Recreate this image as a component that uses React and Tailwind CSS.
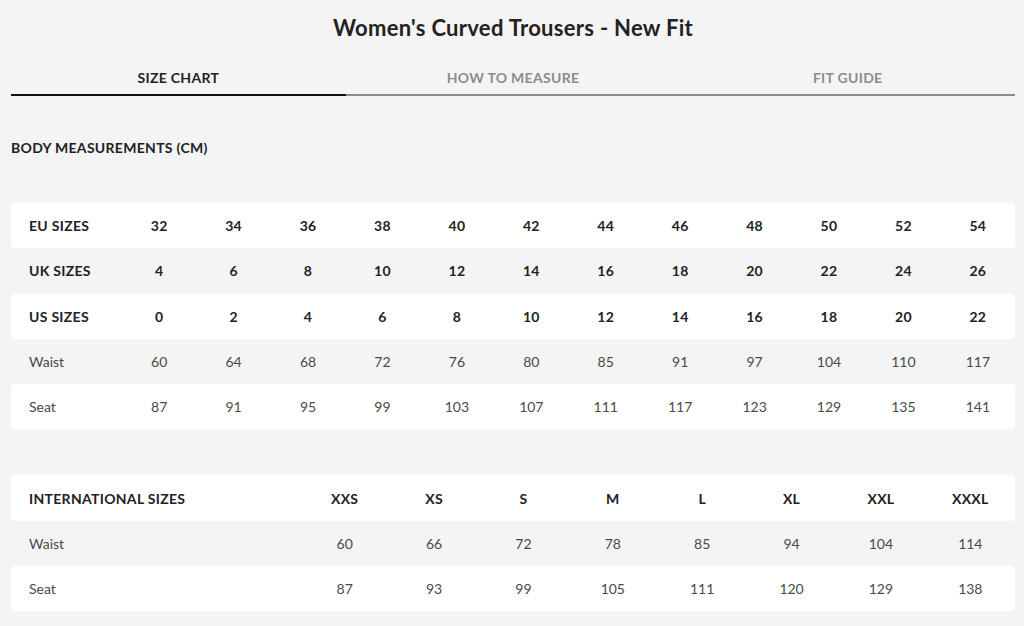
import React from "react";

const body = [
  { label: "EU SIZES", bold: true, values: [32, 34, 36, 38, 40, 42, 44, 46, 48, 50, 52, 54] },
  { label: "UK SIZES", bold: true, values: [4, 6, 8, 10, 12, 14, 16, 18, 20, 22, 24, 26] },
  { label: "US SIZES", bold: true, values: [0, 2, 4, 6, 8, 10, 12, 14, 16, 18, 20, 22] },
  { label: "Waist", values: [60, 64, 68, 72, 76, 80, 85, 91, 97, 104, 110, 117] },
  { label: "Seat", values: [87, 91, 95, 99, 103, 107, 111, 117, 123, 129, 135, 141] },
];

const intl = [
  { label: "INTERNATIONAL SIZES", bold: true, values: ["XXS", "XS", "S", "M", "L", "XL", "XXL", "XXXL"] },
  { label: "Waist", values: [60, 66, 72, 78, 85, 94, 104, 114] },
  { label: "Seat", values: [87, 93, 99, 105, 111, 120, 129, 138] },
];

function SizeTable({ rows, labelWidth }) {
  return (
    <div className="flex flex-col">
      {rows.map((row, i) => (
        <div
          key={row.label}
          className={`flex items-center h-[45.3px] rounded-[4px] ${i % 2 === 0 ? "bg-white" : ""} ${
            row.bold ? "font-bold text-[#222] text-[14px] tracking-[0.3px]" : "text-[#4a4a4a] text-[14px]"
          }`}
        >
          <div className={`${labelWidth} shrink-0 pl-[18px]`}>{row.label}</div>
          {row.values.map((v, j) => (
            <div key={j} className="flex-1 text-center">
              {v}
            </div>
          ))}
        </div>
      ))}
    </div>
  );
}

export default function App() {
  return (
    <div className="min-h-[626px] bg-[#f4f4f4] pl-[11px] pr-[9px] pt-[14px] font-['Lato',sans-serif] text-[#222]">
      <h1 className="text-center text-[22px] font-bold leading-[28px] tracking-[0.3px]">
        Women's Curved Trousers - New Fit
      </h1>
      <div className="mt-[25px] flex">
        <div className="flex-1 border-b-2 border-[#111] pb-[6px] text-center text-[14px] font-bold tracking-[0.3px]">
          SIZE CHART
        </div>
        <div className="flex-1 border-b-2 border-[#8c8c8c] pb-[6px] text-center text-[14px] font-bold tracking-[0.3px] text-[#8c8c8c]">
          HOW TO MEASURE
        </div>
        <div className="flex-1 border-b-2 border-[#8c8c8c] pb-[6px] text-center text-[14px] font-bold tracking-[0.3px] text-[#8c8c8c]">
          FIT GUIDE
        </div>
      </div>
      <h2 className="mt-[41px] text-[14px] font-bold tracking-[0.3px]">BODY MEASUREMENTS (CM)</h2>
      <div className="mt-[45px]">
        <SizeTable rows={body} labelWidth="w-[111px]" />
      </div>
      <div className="mt-[46px]">
        <SizeTable rows={intl} labelWidth="w-[289px]" />
      </div>
    </div>
  );
}
